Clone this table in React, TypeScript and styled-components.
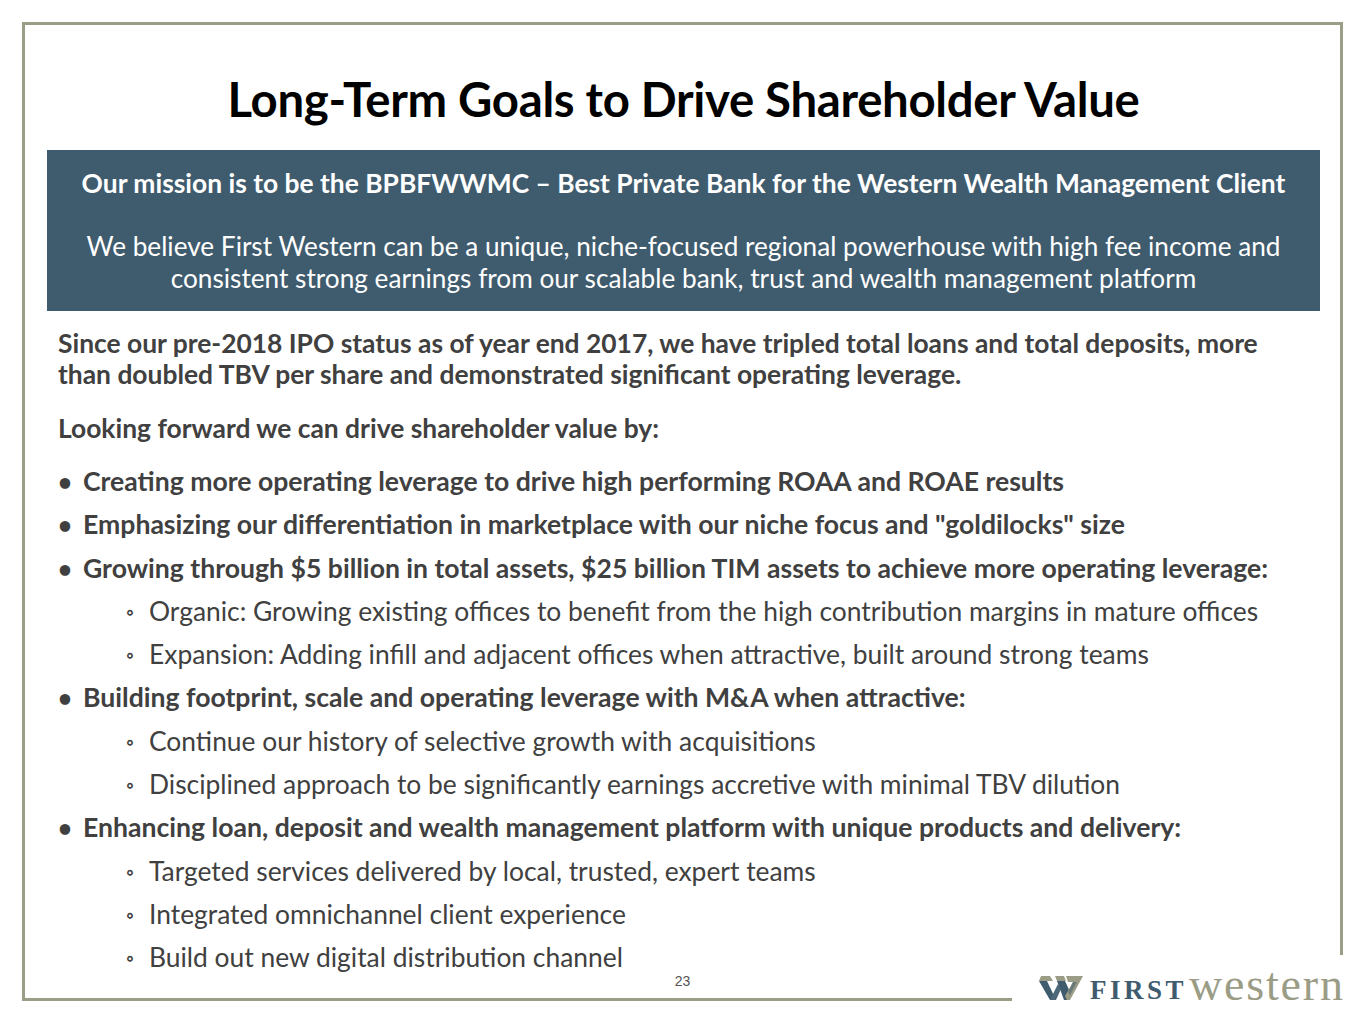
import styled, { createGlobalStyle } from 'styled-components'

const COLOR = {
  FRAME: '#9c9d86',
  SLATE: '#3f5b6e',
  TEXT: '#404040',
  OLIVE: '#9a9c86',
}

const GlobalStyle = createGlobalStyle`
  html, body {
    margin: 0;
    padding: 0;
    background: #fff;
  }
  body {
    font-family: Lato, "Open Sans", sans-serif;
    color: ${COLOR.TEXT};
  }
`

type Item = { text: string; level: 1 | 2 }

const items: Item[] = [
  { text: 'Creating more operating leverage to drive high performing ROAA and ROAE results', level: 1 },
  { text: 'Emphasizing our differentiation in marketplace with our niche focus and "goldilocks" size', level: 1 },
  { text: 'Growing through $5 billion in total assets, $25 billion TIM assets to achieve more operating leverage:', level: 1 },
  { text: 'Organic: Growing existing offices to benefit from the high contribution margins in mature offices', level: 2 },
  { text: 'Expansion: Adding infill and adjacent offices when attractive, built around strong teams', level: 2 },
  { text: 'Building footprint, scale and operating leverage with M&A when attractive:', level: 1 },
  { text: 'Continue our history of selective growth with acquisitions', level: 2 },
  { text: 'Disciplined approach to be significantly earnings accretive with minimal TBV dilution', level: 2 },
  { text: 'Enhancing loan, deposit and wealth management platform with unique products and delivery:', level: 1 },
  { text: 'Targeted services delivered by local, trusted, expert teams', level: 2 },
  { text: 'Integrated omnichannel client experience', level: 2 },
  { text: 'Build out new digital distribution channel', level: 2 },
]

// stylised W: slate down-strokes, olive tops and the olive "7" on the right
const LogoMark = () => (
  <svg width="44" height="25" viewBox="0 0 44 25">
    <polygon points="2,1 11,1 14,6 0,6" fill={COLOR.OLIVE} />
    <polygon points="0,6 8,6 17,25 11,25" fill={COLOR.SLATE} />
    <polygon points="11,25 17,25 22,14 19,9" fill="#4d6878" />
    <polygon points="16,1 25,1 27,6 18,6" fill={COLOR.OLIVE} />
    <polygon points="18,6 26,6 32,19 29,25 25,25" fill={COLOR.SLATE} />
    <polygon points="27,1 44,1 31,25 28,25 26,21 34,7 29,7" fill={COLOR.OLIVE} />
    <polygon points="34,7 38,7 31,20 29,17" fill="#6b7a78" />
  </svg>
)

export default function App() {
  return (
    <Page>
      <GlobalStyle />
      <Frame>
        <Title>Long-Term Goals to Drive Shareholder Value</Title>
        <MissionBox>
          <Mission>
            Our mission is to be the BPBFWWMC – Best Private Bank for the Western Wealth Management Client
          </Mission>
          <Belief>
            We believe First Western can be a unique, niche-focused regional powerhouse with high fee income and
            <br />
            consistent strong earnings from our scalable bank, trust and wealth management platform
          </Belief>
        </MissionBox>
        <Body>
          <Lead>
            Since our pre-2018 IPO status as of year end 2017, we have tripled total loans and total deposits, more
            <br />
            than doubled TBV per share and demonstrated significant operating leverage.
          </Lead>
          <Lead>Looking forward we can drive shareholder value by:</Lead>
          <List>
            {items.map((item) => (
              <Bullet key={item.text} level={item.level}>
                <Marker level={item.level}>{item.level === 1 ? '•' : '◦'}</Marker>
                {item.text}
              </Bullet>
            ))}
          </List>
        </Body>
        <PageNo>23</PageNo>
      </Frame>
      <Logo>
        <LogoMark />
        <LogoFirst>FIRST</LogoFirst>
        <LogoWestern>western</LogoWestern>
      </Logo>
    </Page>
  )
}

const Page = styled.div`
  position: relative;
  width: 1365px;
  height: 1024px;
  padding: 22px 22px 0 22px;
  box-sizing: border-box;
  background: #fff;
`

const Frame = styled.div`
  position: relative;
  width: 1321px;
  height: 979px;
  box-sizing: border-box;
  border: 3px solid ${COLOR.FRAME};
  padding: 46px 20px 0 22px;
`

const Title = styled.h1`
  margin: 0;
  text-align: center;
  font-family: Lato, sans-serif;
  font-weight: 700;
  font-size: 47.3px;
  line-height: 55px;
  color: #000;
  letter-spacing: -0.3px;
`

const MissionBox = styled.div`
  margin-top: 24px;
  background: ${COLOR.SLATE};
  color: #fff;
  text-align: center;
  padding: 17px 0 17px;
`

const Mission = styled.p`
  margin: 0;
  font-weight: 700;
  font-size: 26.4px;
  line-height: 32px;
`

const Belief = styled.p`
  margin: 31px 0 0;
  font-size: 26.2px;
  line-height: 32px;
`

const Body = styled.div`
  padding: 0 0 0 11px;
`

const Lead = styled.p`
  margin: 17px 0 0;
  font-weight: 700;
  font-size: 26.4px;
  line-height: 31px;
  white-space: nowrap;

  & + & {
    margin-top: 23px;
  }
`

const List = styled.ul`
  list-style: none;
  margin: 22px 0 0;
  padding: 0;
  display: flex;
  flex-direction: column;
  gap: 12.3px;
`

interface ILevelProps {
  level: 1 | 2
}

const Bullet = styled.li<ILevelProps>`
  display: block;
  height: 31px;
  padding-left: ${({ level }) => (level === 1 ? '0' : '68px')};
  font-weight: ${({ level }) => (level === 1 ? 700 : 400)};
  font-size: ${({ level }) => (level === 1 ? '26.6px' : '26.4px')};
  line-height: 31px;
  white-space: nowrap;
`

const Marker = styled.span<ILevelProps>`
  display: inline-block;
  width: ${({ level }) => (level === 1 ? '25px' : '23px')};
  font-weight: 700;
  font-size: ${({ level }) => (level === 1 ? '24px' : '19px')};
  line-height: 31px;
  vertical-align: top;
`

const PageNo = styled.div`
  position: absolute;
  left: 0;
  right: 0;
  bottom: 9px;
  text-align: center;
  font-family: "Liberation Sans", Arial, sans-serif;
  font-size: 14px;
  color: #555;
`

const Logo = styled.div`
  position: absolute;
  left: 1012px;
  top: 955px;
  width: 353px;
  height: 69px;
  background: #fff;
  display: flex;
  align-items: flex-end;
  padding: 0 0 24px 27px;
  box-sizing: border-box;
`

const LogoFirst = styled.span`
  margin-left: 7px;
  font-family: "Liberation Serif", "DejaVu Serif", serif;
  font-weight: 700;
  font-size: 27px;
  line-height: 0.72;
  letter-spacing: 3.5px;
  color: ${COLOR.SLATE};
`

const LogoWestern = styled.span`
  margin-left: 2px;
  font-family: "Liberation Serif", "DejaVu Serif", serif;
  font-size: 46px;
  line-height: 0.66;
  letter-spacing: 1.8px;
  color: ${COLOR.OLIVE};
`
